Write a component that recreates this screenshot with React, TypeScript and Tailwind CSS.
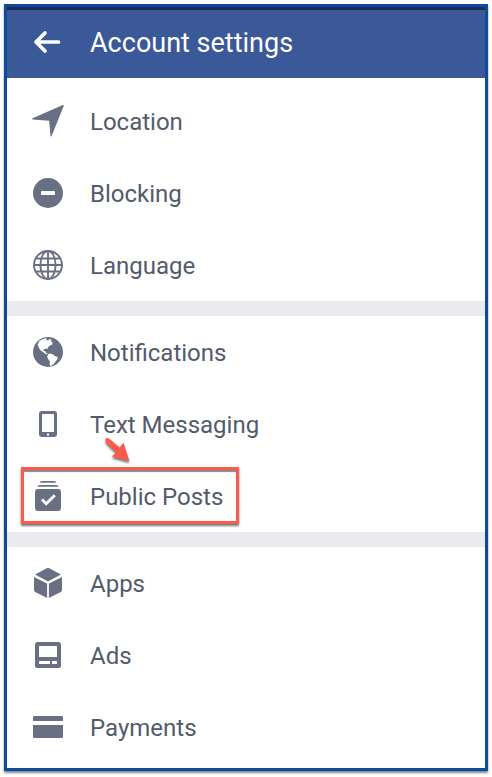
import type { ReactNode } from 'react';

type Item = {
  label: string;
  icon: ReactNode;
  highlighted?: boolean;
};

const iconClass = 'h-[30px] w-[30px] shrink-0 text-[#6a7083]';

function LocationIcon() {
  return (
    <svg viewBox="-1 -1 32 32" className="-mx-px h-8 w-8 shrink-0 text-[#6a7083]" fill="currentColor" aria-hidden="true">
      <path d="M29.8 -.9 Q31.1 -1.1 30.7 .1 L18.6 30 Q18 31.2 17.5 30 L16.2 14.8 L-.3 13.4 Q-1.5 13 -.4 12.2 Z" />
    </svg>
  );
}

function BlockingIcon() {
  return (
    <svg viewBox="0 0 30 30" className={iconClass} aria-hidden="true">
      <circle cx="15" cy="15" r="15" fill="currentColor" />
      <rect x="8" y="13" width="14" height="4" rx="1" fill="#fff" />
    </svg>
  );
}

function LanguageIcon() {
  return (
    <svg viewBox="0 0 30 30" className={iconClass} fill="none" stroke="currentColor" strokeWidth="1.9" aria-hidden="true">
      <circle cx="15" cy="15" r="14" />
      <ellipse cx="15" cy="15" rx="7.6" ry="14" />
      <path d="M15 1v28M1 15h28M3.2 8.5h23.6M3.2 21.5h23.6" />
    </svg>
  );
}

function NotificationsIcon() {
  return (
    <svg viewBox="0 0 30 30" className={iconClass} aria-hidden="true">
      <circle cx="15" cy="15" r="15" fill="currentColor" />
      <path
        fill="#fff"
        d="M6.4 3.9 L9 2.4 12.2 1.3 14 1.6 13.2 3 15 3.6 16.2 2.2 18.4 2.6 18.2 4.6 19.6 5.6 19.2 7.6 17 8.6 15.2 10 14.4 12 12.6 11.6 10.6 12.4 10.8 14 12.4 14 12.8 15.6 14.6 16.6 14.2 17.4 12 16.6 9.6 14.8 7.4 13.2 5.6 10.2 4.8 7.4 Z"
      />
      <path
        fill="#fff"
        d="M15.2 17 L17.2 16.4 19.8 17.2 21.4 18.8 24.6 20 24.4 22.4 22.6 24.2 21.2 26.4 19 28.2 17.2 29 16.6 27.6 17 24.6 15.4 22.4 14.2 20 Z"
      />
    </svg>
  );
}

function MessagingIcon() {
  return (
    <svg viewBox="0 0 30 30" className={iconClass} aria-hidden="true">
      <rect x="6" y="2" width="18" height="26" rx="3" fill="currentColor" />
      <rect x="9" y="5" width="12" height="18" fill="#fff" />
      <rect x="14" y="24.6" width="2" height="2" fill="#fff" />
    </svg>
  );
}

function PostsIcon() {
  return (
    <svg viewBox="0 0 30 30" className={iconClass} fill="currentColor" aria-hidden="true">
      <path d="M6.6 1.7 Q7.2 0 9 0 H21 Q22.8 0 23.4 1.7 Z" />
      <path d="M4.2 5.7 Q4.8 4 6.6 4 H23.4 Q25.2 4 25.8 5.7 Z" />
      <rect x="2" y="8" width="26" height="22" rx="3" />
      <path d="M9 18.6 L13.2 22.8 L21.8 14.2" fill="none" stroke="#fff" strokeWidth="2.8" />
    </svg>
  );
}

function AppsIcon() {
  return (
    <svg viewBox="0 0 30 30" className={iconClass} fill="currentColor" aria-hidden="true">
      <path d="M15 0 Q15.6 0 16.2 .3 L28 6.6 L15 13.4 L2 6.6 L13.8 .3 Q14.4 0 15 0 Z" />
      <path d="M1 9 L14.1 15.6 V30 L2.2 23.9 Q1 23.2 1 22 Z" />
      <path d="M29 9 L15.9 15.6 V30 L27.8 23.9 Q29 23.2 29 22 Z" />
    </svg>
  );
}

function AdsIcon() {
  return (
    <svg viewBox="0 0 30 30" className={iconClass} aria-hidden="true">
      <rect x="2" y="2" width="26" height="26" rx="2.5" fill="currentColor" />
      <path fill="#fff" d="M6 6h18v11H6zM6 21h11v3H6zM19 21h5v3h-5z" />
    </svg>
  );
}

function PaymentsIcon() {
  return (
    <svg viewBox="0 0 30 30" className={iconClass} fill="currentColor" aria-hidden="true">
      <path d="M1.2 4H28.8Q30 4 30 5.2V9H0V5.2Q0 4 1.2 4Z" />
      <path d="M0 13H30V24.8Q30 26 28.8 26H1.2Q0 26 0 24.8Z" />
    </svg>
  );
}

const groups: Item[][] = [
  [
    { label: 'Location', icon: <LocationIcon /> },
    { label: 'Blocking', icon: <BlockingIcon /> },
    { label: 'Language', icon: <LanguageIcon /> },
  ],
  [
    { label: 'Notifications', icon: <NotificationsIcon /> },
    { label: 'Text Messaging', icon: <MessagingIcon /> },
    { label: 'Public Posts', icon: <PostsIcon />, highlighted: true },
  ],
  [
    { label: 'Apps', icon: <AppsIcon /> },
    { label: 'Ads', icon: <AdsIcon /> },
    { label: 'Payments', icon: <PaymentsIcon /> },
  ],
];

// Red box and arrow that point at the highlighted row
function Callout() {
  return (
    <>
      <span className="pointer-events-none absolute top-[7px] left-[14px] h-[57px] w-[218px] border-3 border-[#fc5b4c] shadow-[0_2px_2px_#777,inset_0_2px_1px_#888]" />
      <svg
        viewBox="0 0 30 30"
        className="pointer-events-none absolute -top-6 left-24 h-[30px] w-[30px] drop-shadow-[0_2px_1px_#777]"
        aria-hidden="true"
      >
        <path
          fill="#fc5b4c"
          d="M2.4 4.2 Q2 1.6 4.2 2 L6.4 2.8 L16.8 11.6 L20.4 6.6 L26.4 25.2 L8.8 20.4 L13.2 16.6 L3 6.6 Z"
        />
      </svg>
    </>
  );
}

function Row({ label, icon, highlighted }: Item) {
  return (
    <li className="relative">
      <a href="#" className="flex h-[72px] items-center gap-[27px] px-[26px] text-2xl text-[#525b6b]">
        {icon}
        <span className="pt-[2px]">{label}</span>
      </a>
      {highlighted && <Callout />}
    </li>
  );
}

export default function App() {
  return (
    <div className="min-h-screen bg-white p-1 pb-[6px] font-['Roboto',sans-serif]">
      <div className="border-3 border-[#0c4c9c] bg-white pb-[5px] shadow-[0_2px_2px_#888]">
        <header className="flex h-[71px] items-center gap-[27px] border-t-3 border-[#1f2c50] bg-[#3b5998] px-[26px] pb-[5px]">
          <button type="button" aria-label="Back" className="h-[30px] w-[30px] shrink-0 text-white">
            <svg viewBox="0 0 30 30" fill="none" stroke="currentColor" strokeWidth="3.7" strokeLinecap="round" strokeLinejoin="round">
              <path d="M12 6 L3 15 L12 24 M4 15 H25.5" />
            </svg>
          </button>
          <h1 className="pt-1 text-[27px] text-white">Account settings</h1>
        </header>
        <main className="pt-[7px]">
          {groups.map((items, i) => (
            <ul key={i} className={i > 0 ? 'border-t-15 border-[#e9ebee]' : ''}>
              {items.map((item) => (
                <Row key={item.label} {...item} />
              ))}
            </ul>
          ))}
        </main>
      </div>
    </div>
  );
}
